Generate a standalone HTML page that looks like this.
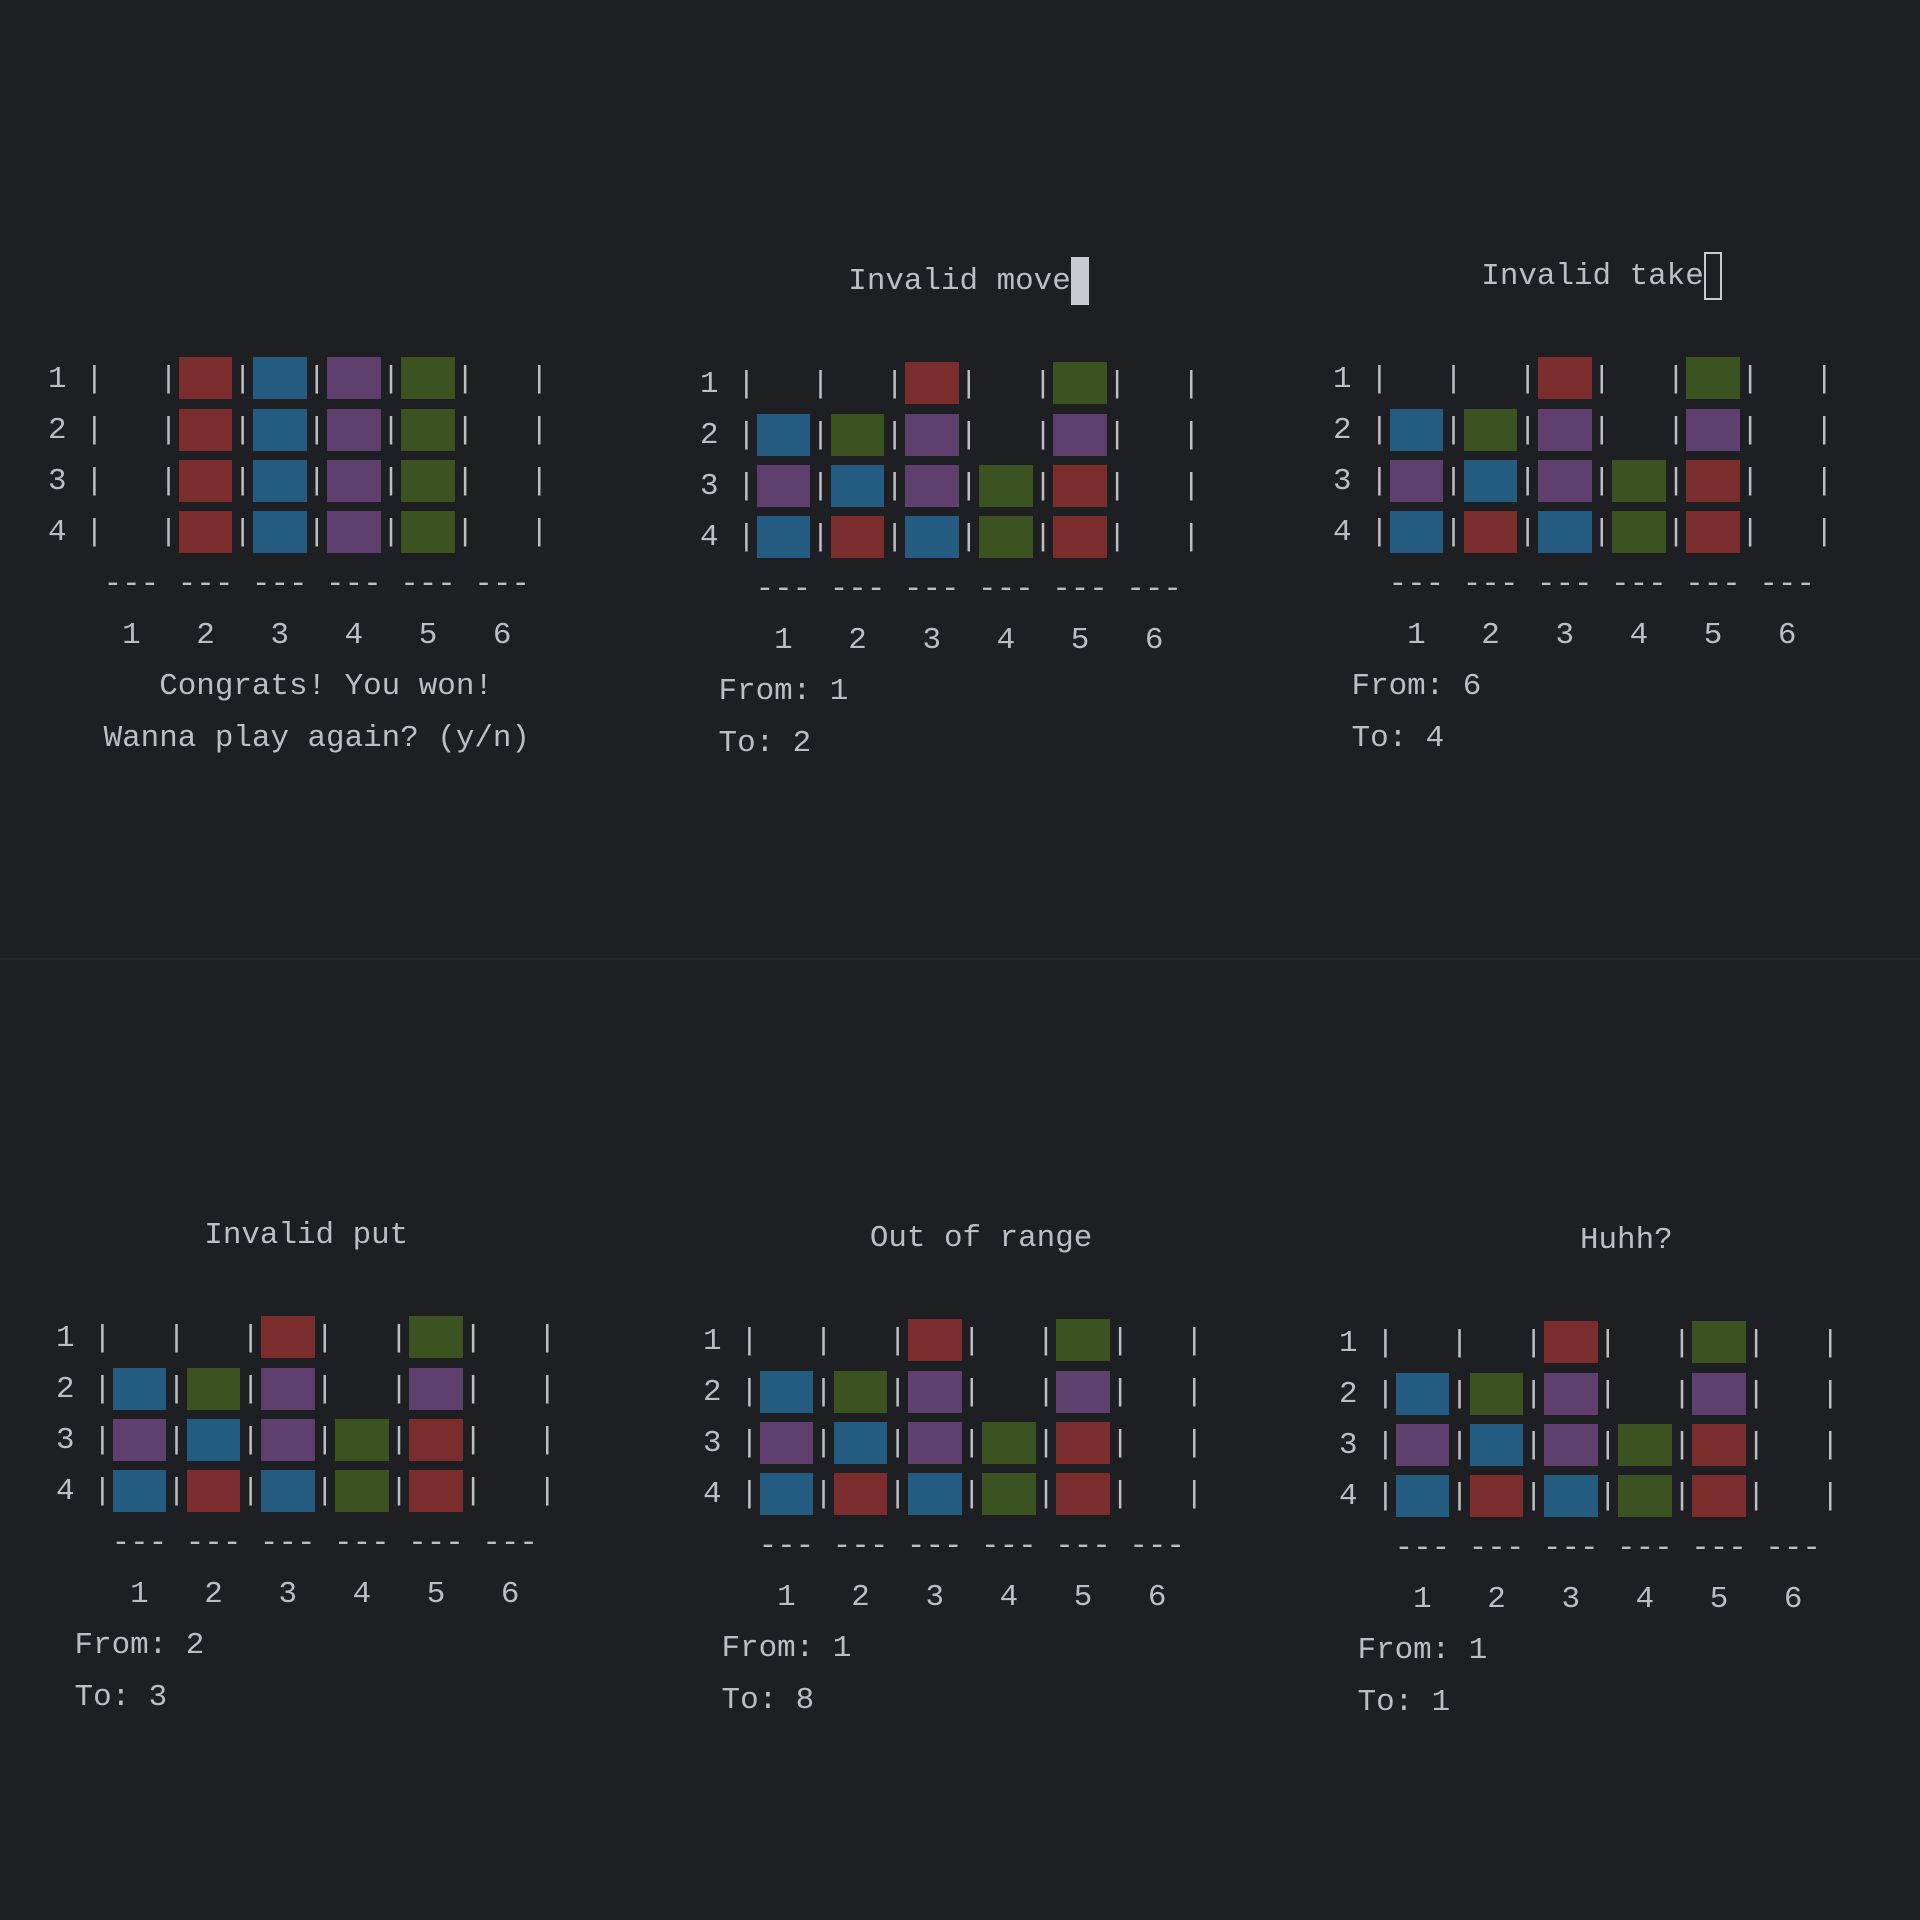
<!DOCTYPE html>
<html><head><meta charset="utf-8"><style>
html,body{margin:0;padding:0;background:#1e1f22;width:1920px;height:1920px;overflow:hidden}
.hr{position:absolute;left:0;top:958px;width:1920px;height:2px;background:#26282c}
pre{position:absolute;margin:0;font-family:"Liberation Mono",monospace;font-size:30.9px;line-height:51.3px;color:#bcbec4;white-space:pre}
b{display:inline-block;width:3ch;height:42px;box-sizing:border-box;padding:0 1px;background-clip:content-box;vertical-align:middle;line-height:42px;font-weight:normal}
.r{background-color:#7b2d2d}.u{background-color:#245b81}.p{background-color:#5e3f6e}.g{background-color:#3a5320}
.cf{display:inline-block;width:1ch;height:48px;background:#c9cbd0;vertical-align:middle}
.co{display:inline-block;width:1ch;height:48px;box-sizing:border-box;border:2px solid #c9cbd0;vertical-align:middle}
</style></head><body>
<div class="hr"></div>

<pre style="left:48px;top:251px">
&nbsp;

1 |   |<b class="r"> </b>|<b class="u"> </b>|<b class="p"> </b>|<b class="g"> </b>|   |
2 |   |<b class="r"> </b>|<b class="u"> </b>|<b class="p"> </b>|<b class="g"> </b>|   |
3 |   |<b class="r"> </b>|<b class="u"> </b>|<b class="p"> </b>|<b class="g"> </b>|   |
4 |   |<b class="r"> </b>|<b class="u"> </b>|<b class="p"> </b>|<b class="g"> </b>|   |
   --- --- --- --- --- ---
    1   2   3   4   5   6
      Congrats! You won!
   Wanna play again? (y/n)</pre>

<pre style="left:700px;top:256px">        Invalid move<span class="cf"></span>

1 |   |   |<b class="r"> </b>|   |<b class="g"> </b>|   |
2 |<b class="u"> </b>|<b class="g"> </b>|<b class="p"> </b>|   |<b class="p"> </b>|   |
3 |<b class="p"> </b>|<b class="u"> </b>|<b class="p"> </b>|<b class="g"> </b>|<b class="r"> </b>|   |
4 |<b class="u"> </b>|<b class="r"> </b>|<b class="u"> </b>|<b class="g"> </b>|<b class="r"> </b>|   |
   --- --- --- --- --- ---
    1   2   3   4   5   6
 From: 1
 To: 2</pre>

<pre style="left:1333px;top:251px">        Invalid take<span class="co"></span>

1 |   |   |<b class="r"> </b>|   |<b class="g"> </b>|   |
2 |<b class="u"> </b>|<b class="g"> </b>|<b class="p"> </b>|   |<b class="p"> </b>|   |
3 |<b class="p"> </b>|<b class="u"> </b>|<b class="p"> </b>|<b class="g"> </b>|<b class="r"> </b>|   |
4 |<b class="u"> </b>|<b class="r"> </b>|<b class="u"> </b>|<b class="g"> </b>|<b class="r"> </b>|   |
   --- --- --- --- --- ---
    1   2   3   4   5   6
 From: 6
 To: 4</pre>

<pre style="left:56px;top:1210px">        Invalid put

1 |   |   |<b class="r"> </b>|   |<b class="g"> </b>|   |
2 |<b class="u"> </b>|<b class="g"> </b>|<b class="p"> </b>|   |<b class="p"> </b>|   |
3 |<b class="p"> </b>|<b class="u"> </b>|<b class="p"> </b>|<b class="g"> </b>|<b class="r"> </b>|   |
4 |<b class="u"> </b>|<b class="r"> </b>|<b class="u"> </b>|<b class="g"> </b>|<b class="r"> </b>|   |
   --- --- --- --- --- ---
    1   2   3   4   5   6
 From: 2
 To: 3</pre>

<pre style="left:703px;top:1213px">         Out of range

1 |   |   |<b class="r"> </b>|   |<b class="g"> </b>|   |
2 |<b class="u"> </b>|<b class="g"> </b>|<b class="p"> </b>|   |<b class="p"> </b>|   |
3 |<b class="p"> </b>|<b class="u"> </b>|<b class="p"> </b>|<b class="g"> </b>|<b class="r"> </b>|   |
4 |<b class="u"> </b>|<b class="r"> </b>|<b class="u"> </b>|<b class="g"> </b>|<b class="r"> </b>|   |
   --- --- --- --- --- ---
    1   2   3   4   5   6
 From: 1
 To: 8</pre>

<pre style="left:1339px;top:1215px">             Huhh?

1 |   |   |<b class="r"> </b>|   |<b class="g"> </b>|   |
2 |<b class="u"> </b>|<b class="g"> </b>|<b class="p"> </b>|   |<b class="p"> </b>|   |
3 |<b class="p"> </b>|<b class="u"> </b>|<b class="p"> </b>|<b class="g"> </b>|<b class="r"> </b>|   |
4 |<b class="u"> </b>|<b class="r"> </b>|<b class="u"> </b>|<b class="g"> </b>|<b class="r"> </b>|   |
   --- --- --- --- --- ---
    1   2   3   4   5   6
 From: 1
 To: 1</pre>

</body></html>
